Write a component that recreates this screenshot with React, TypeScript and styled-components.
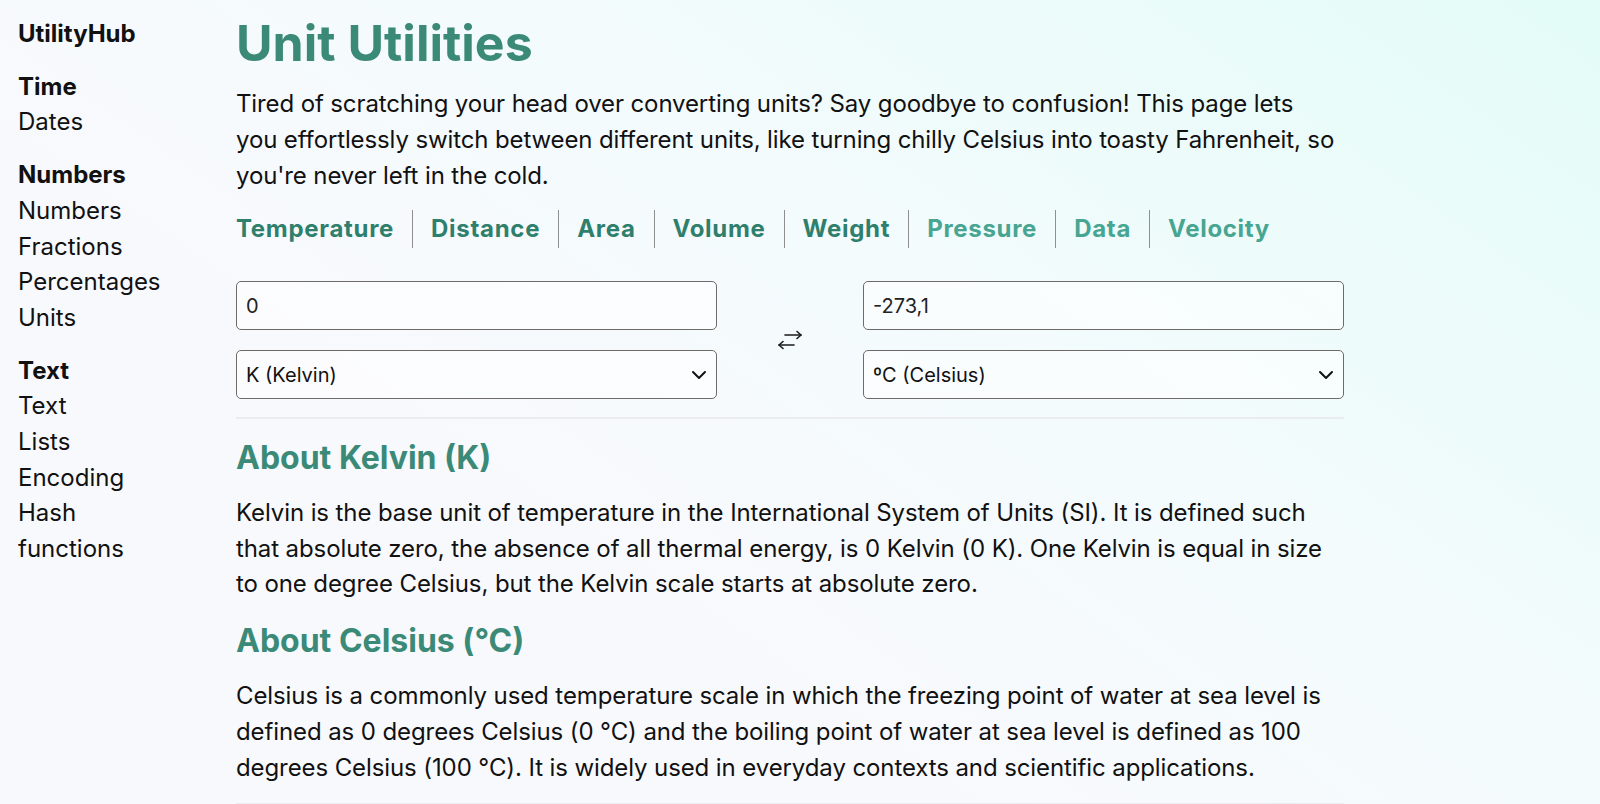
import React from "react";
import styled, { createGlobalStyle } from "styled-components";

const GlobalStyle = createGlobalStyle`
  html, body {
    margin: 0;
    padding: 0;
  }
  body {
    font-family: Inter, "Noto Sans", "Liberation Sans", sans-serif;
    color: #111;
    background: linear-gradient(215deg, #e3fcf7 0%, #f3fbfd 38%, #f8f9fd 65%, #f8f9fd 100%);
    min-height: 804px;
  }
`;

const Page = styled.div`
  display: flex;
  align-items: flex-start;
  gap: 63px;
  padding: 0 0 0 18px;
  min-height: 804px;
  box-sizing: border-box;
`;

const Sidebar = styled.nav`
  width: 155px;
  flex: none;
  display: flex;
  flex-direction: column;
  gap: 17px;
  padding-top: 16px;
  font-size: 24px;
  line-height: 35.7px;
`;

const Brand = styled.div`
  font-weight: 700;
`;

const NavGroup = styled.div`
  display: flex;
  flex-direction: column;
`;

const NavHeading = styled.div`
  font-weight: 700;
`;

const NavLink = styled.a`
  color: #111;
  text-decoration: none;
`;

const Main = styled.main`
  width: 1108px;
  flex: none;
  padding-top: 14px;
`;

const Title = styled.h1`
  margin: 0;
  font-size: 50px;
  line-height: 58px;
  font-weight: 700;
  color: #3b8a78;
`;

const Intro = styled.p`
  margin: 14px 0 0;
  max-width: 1100px;
  font-size: 24px;
  line-height: 36px;
  letter-spacing: -0.12px;
`;

const Tabs = styled.div`
  display: flex;
  align-items: center;
  margin-top: 16px;
`;

const Tab = styled.a<{ $light?: boolean; $first?: boolean }>`
  font-size: 24px;
  line-height: 36px;
  font-weight: 700;
  letter-spacing: 0.7px;
  text-decoration: none;
  color: ${(p) => (p.$light ? "#47a591" : "#2f7f6d")};
  padding: 1px 18px;
  border-left: ${(p) => (p.$first ? "none" : "1px solid #8f8f8f")};
  padding-left: ${(p) => (p.$first ? "0" : "18px")};
`;

const Converter = styled.div`
  display: grid;
  grid-template-columns: 481px 1fr 481px;
  margin-top: 33px;
`;

const Column = styled.div`
  display: flex;
  flex-direction: column;
  gap: 20px;
`;

const Field = styled.input`
  box-sizing: border-box;
  height: 49px;
  width: 100%;
  border: 1px solid #6e6a6a;
  border-radius: 5px;
  background: rgba(255, 255, 255, 0.55);
  padding: 0 9px;
  font-family: inherit;
  font-size: 20px;
  color: #222;
  outline: none;
`;

const SelectWrap = styled.div`
  position: relative;
`;

const Select = styled.select`
  box-sizing: border-box;
  appearance: none;
  height: 49px;
  width: 100%;
  border: 1px solid #6e6a6a;
  border-radius: 5px;
  background: rgba(255, 255, 255, 0.55);
  padding: 0 9px;
  font-family: inherit;
  font-size: 20px;
  color: #111;
  outline: none;
`;

const Chevron = styled.svg`
  position: absolute;
  right: 10px;
  top: 50%;
  transform: translateY(-50%);
  pointer-events: none;
`;

const SwapCell = styled.div`
  display: flex;
  align-items: center;
  justify-content: center;
`;

const Divider = styled.hr`
  margin: 18px 0 0;
  border: none;
  border-top: 2px solid #eaecef;
`;

const SectionTitle = styled.h2`
  margin: 19px 0 0;
  font-size: 32px;
  line-height: 40px;
  font-weight: 700;
  color: #3b8a78;
`;

const SectionText = styled.p`
  margin: 17px 0 0;
  font-size: 24px;
  line-height: 35.7px;
  letter-spacing: -0.1px;
`;

const SwapIcon = () => (
  <svg width="24" height="20" viewBox="0 0 24 20" fill="none" stroke="#1a1a1a" strokeWidth="1.6" strokeLinecap="round" strokeLinejoin="round">
    <line x1="7" y1="5" x2="23" y2="5" />
    <polyline points="19,1.5 23,5 19,8.5" />
    <line x1="1" y1="15" x2="16" y2="15" />
    <polyline points="5,11.5 1,15 5,18.5" />
  </svg>
);

const ChevronIcon = () => (
  <Chevron width="16" height="10" viewBox="0 0 16 10" fill="none" stroke="#111" strokeWidth="2" strokeLinecap="round" strokeLinejoin="round">
    <polyline points="2,2 8,8 14,2" />
  </Chevron>
);

const tabs = [
  { label: "Temperature", light: false },
  { label: "Distance", light: false },
  { label: "Area", light: false },
  { label: "Volume", light: false },
  { label: "Weight", light: false },
  { label: "Pressure", light: true },
  { label: "Data", light: true },
  { label: "Velocity", light: true },
];

const nav = [
  { heading: "Time", items: ["Dates"] },
  { heading: "Numbers", items: ["Numbers", "Fractions", "Percentages", "Units"] },
  { heading: "Text", items: ["Text", "Lists", "Encoding", "Hash functions"] },
];

export default function App() {
  return (
    <>
      <GlobalStyle />
      <Page>
        <Sidebar>
          <Brand>UtilityHub</Brand>
          {nav.map((g) => (
            <NavGroup key={g.heading}>
              <NavHeading>{g.heading}</NavHeading>
              {g.items.map((i) => (
                <NavLink key={i} href="#">
                  {i}
                </NavLink>
              ))}
            </NavGroup>
          ))}
        </Sidebar>
        <Main>
          <Title>Unit Utilities</Title>
          <Intro>
            Tired of scratching your head over converting units? Say goodbye to confusion! This page lets you
            effortlessly switch between different units, like turning chilly Celsius into toasty Fahrenheit, so
            you're never left in the cold.
          </Intro>
          <Tabs>
            {tabs.map((t, i) => (
              <Tab key={t.label} href="#" $light={t.light} $first={i === 0}>
                {t.label}
              </Tab>
            ))}
          </Tabs>
          <Converter>
            <Column>
              <Field readOnly value="0" />
              <SelectWrap>
                <Select defaultValue="K">
                  <option value="K">K (Kelvin)</option>
                </Select>
                <ChevronIcon />
              </SelectWrap>
            </Column>
            <SwapCell>
              <SwapIcon />
            </SwapCell>
            <Column>
              <Field readOnly value="-273,1" />
              <SelectWrap>
                <Select defaultValue="C">
                  <option value="C">ºC (Celsius)</option>
                </Select>
                <ChevronIcon />
              </SelectWrap>
            </Column>
          </Converter>
          <Divider />
          <SectionTitle>About Kelvin (K)</SectionTitle>
          <SectionText>
            Kelvin is the base unit of temperature in the International System of Units (SI). It is defined such
            that absolute zero, the absence of all thermal energy, is 0 Kelvin (0 K). One Kelvin is equal in size
            to one degree Celsius, but the Kelvin scale starts at absolute zero.
          </SectionText>
          <SectionTitle>About Celsius (°C)</SectionTitle>
          <SectionText>
            Celsius is a commonly used temperature scale in which the freezing point of water at sea level is
            defined as 0 degrees Celsius (0 °C) and the boiling point of water at sea level is defined as 100
            degrees Celsius (100 °C). It is widely used in everyday contexts and scientific applications.
          </SectionText>
          <Divider />
        </Main>
      </Page>
    </>
  );
}
